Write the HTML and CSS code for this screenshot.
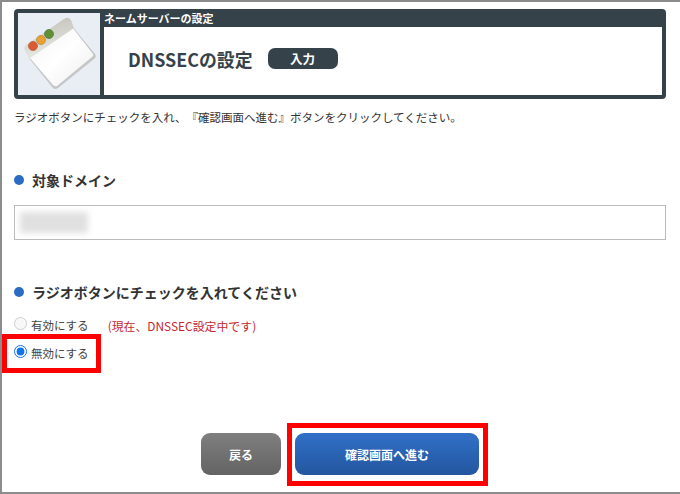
FILE: index.html
```html
<!DOCTYPE html>
<html lang="ja">
<head>
<meta charset="utf-8">
<title>DNSSECの設定</title>
<link rel="stylesheet" href="styles.css">
</head>
<body>
<div class="frame">
  <header class="banner">
    <div class="banner-icon">
      <svg width="82" height="82" viewBox="0 0 82 82">
        <defs>
          <linearGradient id="bodyGrad" x1="0" y1="0" x2="1" y2="1">
            <stop offset="0" stop-color="#f2f2f2"/>
            <stop offset="0.5" stop-color="#ffffff"/>
            <stop offset="1" stop-color="#ececec"/>
          </linearGradient>
          <linearGradient id="barGrad" x1="0.6" y1="1" x2="0.4" y2="0">
            <stop offset="0" stop-color="#ecece8"/>
            <stop offset="1" stop-color="#c4c4bc"/>
          </linearGradient>
        </defs>
        <path d="M10 44 L54 13 L77 41 Q79 44 76 46 L40 75 Q37 77 35 75 Z" fill="#c4c6c8"/>
        <path d="M11 44 L54 14 L75 41 Q76 43 74 44 L39 73 Q37 74 35 72 Z" fill="url(#bodyGrad)"/>
        <path d="M7 38 Q5 34 8 32 L46 6 Q50 3 53 7 L56 15 L11 46 Z" fill="url(#barGrad)"/>
        <circle cx="15" cy="33" r="4.500" fill="#db5a33" stroke="#b9653f" stroke-width="0.800"/>
        <circle cx="23" cy="27" r="4.500" fill="#e8a234" stroke="#b98b3f" stroke-width="0.800"/>
        <circle cx="31" cy="21" r="4.500" fill="#5f9134" stroke="#5d7a42" stroke-width="0.800"/>
      </svg>
    </div>
    <div class="banner-main">
      <div class="banner-label">ネームサーバーの設定</div>
      <div class="banner-body">
        <h1 class="banner-title">DNSSECの設定</h1>
        <span class="step-pill">入力</span>
      </div>
    </div>
  </header>

  <p class="lead">ラジオボタンにチェックを入れ、『確認画面へ進む』ボタンをクリックしてください。</p>

  <h2 class="section-title section-domain">対象ドメイン</h2>
  <div class="domain-field"><span class="domain-blur"></span></div>

  <h2 class="section-title section-radio">ラジオボタンにチェックを入れてください</h2>
  <div class="radio-row">
    <label class="radio-label"><input class="radio" type="radio" name="dnssec" disabled>有効にする</label>
    <span class="status-note">(現在、DNSSEC設定中です)</span>
  </div>
  <div class="radio-row radio-row-second">
    <label class="radio-label"><input class="radio" type="radio" name="dnssec" checked>無効にする</label>
  </div>

  <div class="actions">
    <button class="btn btn-back" type="button">戻る</button>
    <button class="btn btn-next" type="button">確認画面へ進む</button>
  </div>

  <div class="mark mark-radio"></div>
  <div class="mark mark-next"></div>
</div>
</body>
</html>
```
FILE: styles.css
```css
* { box-sizing: border-box; }
html, body { margin: 0; padding: 0; background: #fff; }
body {
  width: 680px;
  height: 494px;
  overflow: hidden;
  font-family: "Noto Sans CJK JP", "Liberation Sans", sans-serif;
  color: #333;
  text-spacing-trim: space-all;
}
.frame {
  position: relative;
  width: 680px;
  height: 494px;
  border-top: 2px solid #8c8c8c;
  border-left: 2px solid #8c8c8c;
  border-bottom: 2px solid #8c8c8c;
  padding: 7px 14px 0 12px;
  display: flex;
  flex-direction: column;
}
.banner {
  display: flex;
  height: 90px;
  background: #36424a;
  border-radius: 4px;
  padding: 4px;
  flex: none;
}
.banner-icon {
  width: 82px;
  height: 82px;
  background: #e9eef5;
  flex: none;
}
.banner-main {
  flex: 1;
  display: flex;
  flex-direction: column;
  margin-left: 4px;
}
.banner-label {
  height: 15px;
  margin-top: -1px;
  color: #fff;
  font-size: 11px;
  font-weight: 700;
  line-height: 12px;
}
.banner-body {
  flex: 1;
  background: #fff;
  display: flex;
  align-items: center;
  padding: 0 0 5px 24px;
}
.banner-title {
  margin: 0;
  font-size: 17.900px;
  font-weight: 700;
  color: #36424a;
  line-height: 20px;
}
.step-pill {
  margin-left: 15px;
  width: 70px;
  height: 21px;
  background: #36424a;
  border-radius: 7px;
  color: #fff;
  font-size: 12.500px;
  font-weight: 700;
  line-height: 21px;
  text-align: center;
}
.lead {
  margin: 10px 0 0;
  font-size: 11.500px;
  line-height: 16px;
  color: #333;
}
.section-title {
  margin: 0;
  position: relative;
  padding-left: 18px;
  font-size: 14px;
  font-weight: 700;
  line-height: 18px;
  color: #333;
}
.section-title::before {
  content: "";
  position: absolute;
  left: 0;
  top: 4px;
  width: 10px;
  height: 10px;
  border-radius: 50%;
  background: #2b6cc4;
}
.section-domain { margin-top: 46px; }
.section-radio { margin-top: 43px; }
.domain-field {
  margin-top: 16px;
  width: 652px;
  height: 35px;
  border: 1px solid #bbb;
  background: #fff;
  padding: 6px 5px;
}
.domain-blur {
  display: block;
  width: 68px;
  height: 21px;
  background: #e0e0e0;
  filter: blur(3px);
}
.radio-row {
  display: flex;
  align-items: center;
  height: 20px;
  margin-top: 14px;
}
.radio-row-second { margin-top: 8px; }
.radio-label {
  display: flex;
  align-items: center;
  font-size: 11.500px;
  color: #444;
}
.radio {
  width: 13px;
  height: 13px;
  margin: -3px 4px 0 0;
  accent-color: #0f75e8;
}
.status-note {
  margin-left: 19px;
  font-size: 11.900px;
  color: #c4272f;
}
.actions {
  display: flex;
  gap: 14px;
  margin-top: 70px;
  padding-left: 187px;
}
.btn {
  height: 42px;
  border: 0;
  border-radius: 9px;
  color: #fff;
  font-family: inherit;
  font-size: 12px;
  font-weight: 700;
  padding: 0;
}
.btn-back {
  width: 80px;
  background: linear-gradient(#7f7f7f, #636363);
}
.btn-next {
  width: 184px;
  background: linear-gradient(#3170c8, #23569f);
}
.mark {
  position: absolute;
  border: 5px solid #f00;
  pointer-events: none;
}
.mark-radio {
  left: 0;
  top: 332px;
  width: 99px;
  height: 39px;
}
.mark-next {
  left: 285px;
  top: 421px;
  width: 201px;
  height: 63px;
}
```
